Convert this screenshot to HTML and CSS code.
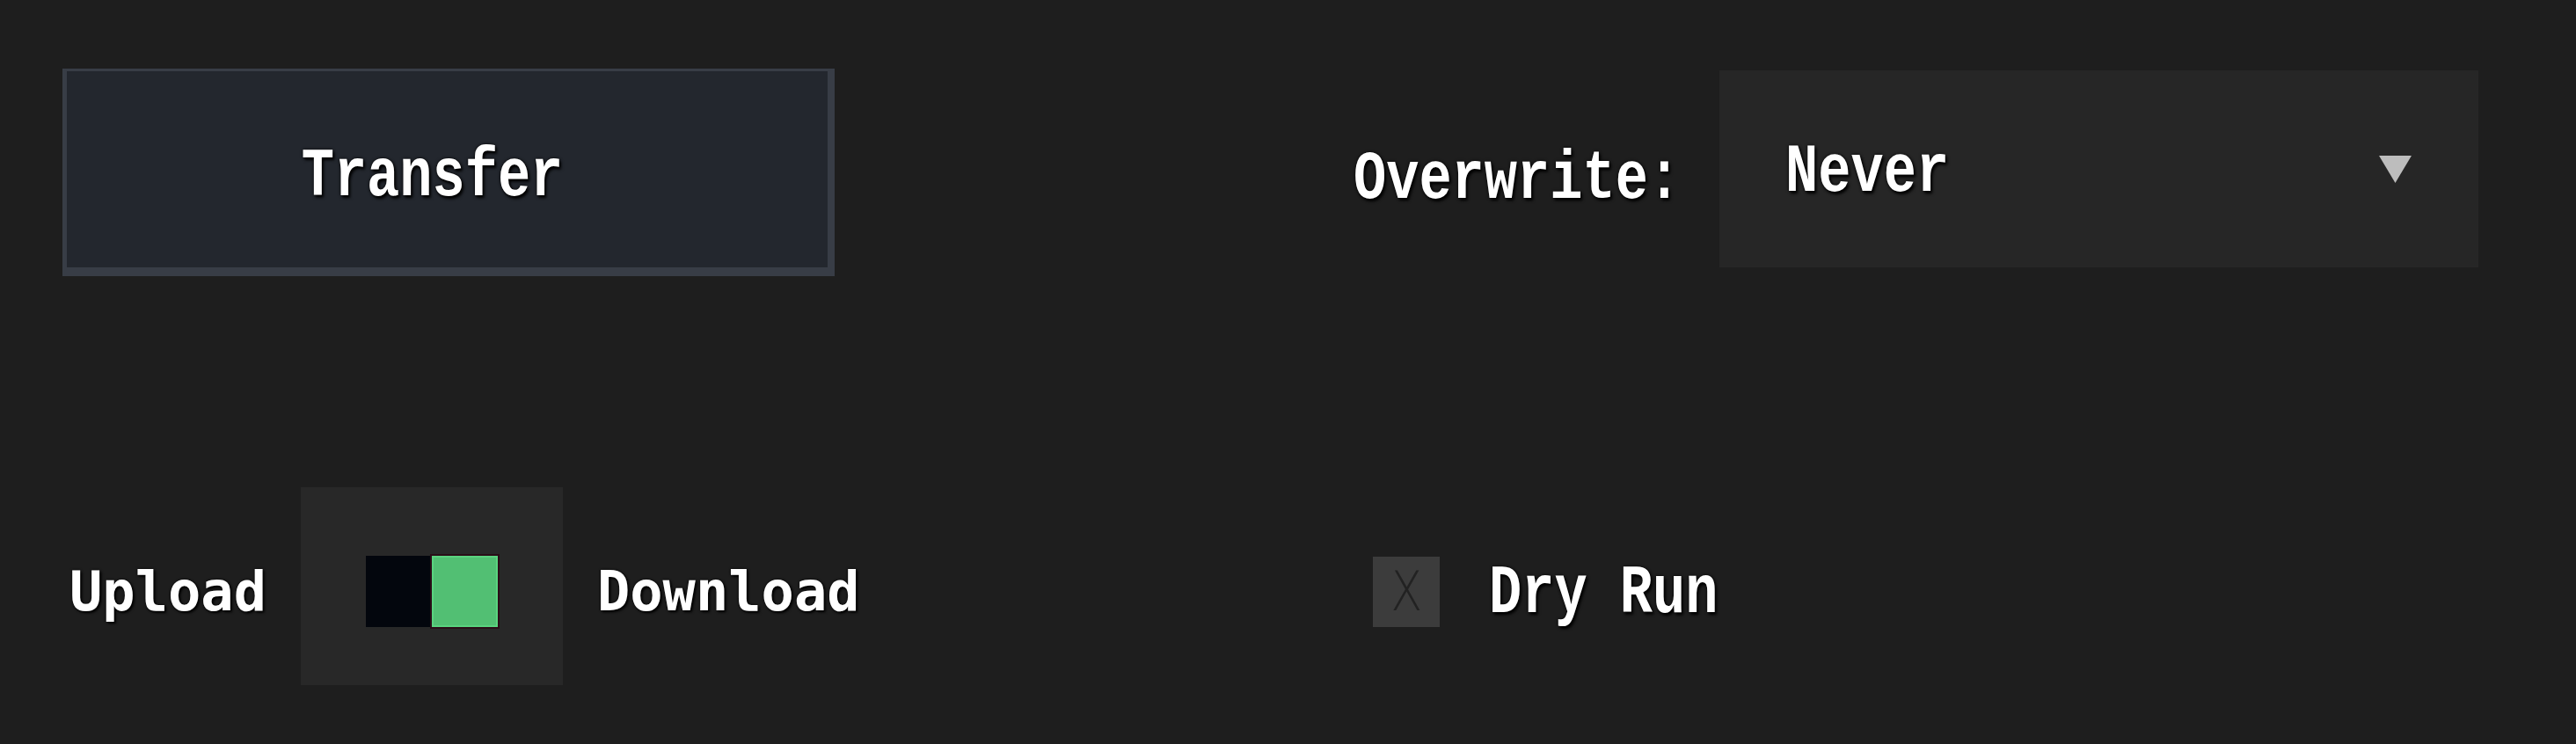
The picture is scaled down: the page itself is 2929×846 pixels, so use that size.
FILE: index.html
```html
<!DOCTYPE html>
<html>
<head>
<meta charset="utf-8">
<link rel="stylesheet" href="styles.css">
</head>
<body>
<div class="panel">
  <div class="cell cell-transfer">
    <button class="btn-transfer"><span class="txt serif">Transfer</span></button>
  </div>
  <div class="cell cell-overwrite">
    <span class="label txt serif">Overwrite:</span>
    <div class="select">
      <span class="txt serif">Never</span>
      <svg class="caret" width="39" height="33" viewBox="0 0 39 33"><polygon points="1,1 38,1 19.5,32" fill="#bdbdbd"/></svg>
    </div>
  </div>
  <div class="cell cell-direction">
    <span class="txt sans">Upload</span>
    <div class="toggle-box">
      <div class="switch"><span class="sw-off"></span><span class="sw-on"></span></div>
    </div>
    <span class="txt sans">Download</span>
  </div>
  <div class="cell cell-dry">
    <span class="check"><span class="check-x">X</span></span>
    <span class="txt serif">Dry Run</span>
  </div>
</div>
</body>
</html>
```

FILE: styles.css
```css
html, body {
  margin: 0;
  padding: 0;
  background: #1e1e1e;
  width: 2929px;
  height: 846px;
  overflow: hidden;
}

.panel {
  display: grid;
  grid-template-columns: 1468px 1300px;
  grid-template-rows: 236px 225px;
  row-gap: 240px;
  padding: 78px 0 0 71px;
}

.txt {
  font-size: 62px;
  font-weight: 700;
  color: #ffffff;
  text-shadow: 2px 2px 3px #000, 0 0 3px #000;
  white-space: nowrap;
  line-height: 1;
  flex-shrink: 0;
}

.serif {
  font-family: "Liberation Mono", monospace;
  display: inline-block;
  transform: scaleY(1.25);
  margin-top: 18px;
}

.sans {
  font-family: "DejaVu Sans Mono", monospace;
  margin-top: 12px;
}

.cell {
  display: flex;
  align-items: center;
}

.btn-transfer {
  box-sizing: border-box;
  width: 878px;
  height: 236px;
  background: #23272e;
  border-style: solid;
  border-color: #383d46;
  border-width: 3px 8px 10px 5px;
  padding: 0 34px 0 0;
  display: flex;
  align-items: center;
  justify-content: center;
  margin: 0;
}

.cell-overwrite {
  gap: 44px;
}

.select {
  box-sizing: border-box;
  flex-shrink: 0;
  width: 863px;
  height: 224px;
  margin-bottom: 8px;
  background: #262626;
  display: flex;
  align-items: center;
  justify-content: space-between;
  padding: 0 75px;
}

.select .txt {
  margin-top: 10px;
}

.caret {
  display: block;
  flex-shrink: 0;
}

.cell-direction {
  gap: 39px;
  padding-left: 8px;
}

.toggle-box {
  flex-shrink: 0;
  width: 298px;
  height: 225px;
  background: #282828;
  display: flex;
  align-items: center;
  justify-content: center;
}

.switch {
  display: flex;
  margin-top: 12px;
}

.sw-off {
  width: 75px;
  height: 81px;
  background: #03060d;
}

.sw-on {
  box-sizing: border-box;
  width: 75px;
  height: 81px;
  background: #52bf73;
  border: 2px solid #5ad37f;
  outline: 2px solid #2a0d18;
}

.cell-dry {
  padding-left: 22px;
  gap: 56px;
}

.check {
  flex-shrink: 0;
  box-sizing: border-box;
  width: 76px;
  height: 80px;
  margin-top: 12px;
  background: #3c3c3c;
  display: flex;
  align-items: center;
  justify-content: center;
}

.check-x {
  display: inline-block;
  color: #222222;
  font-family: "DejaVu Sans", sans-serif;
  font-size: 62px;
  font-weight: 300;
  line-height: 1;
  transform: scaleX(0.85);
}
```
